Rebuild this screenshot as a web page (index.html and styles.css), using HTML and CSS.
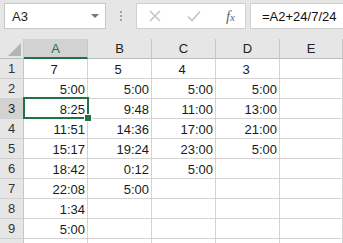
FILE: index.html
```html
<!DOCTYPE html>
<html lang="en">
  <head>
    <meta charset="UTF-8" />
    <meta name="viewport" content="width=device-width, initial-scale=1.0" />
    <title>Sheet</title>
    <link rel="stylesheet" href="styles.css">
  </head>
  <body>
    <div class="toolbar">
      <div class="namebox">
        <span>A3</span>
        <span class="drop"></span>
      </div>
      <div class="dots"><i></i><i></i><i></i></div>
      <div class="actions">
        <svg width="14" height="14" viewBox="0 0 14 14"><path d="M2 2L12 12M12 2L2 12" stroke="#c4c4c4" stroke-width="1.6" fill="none"/></svg>
        <svg width="16" height="14" viewBox="0 0 16 14"><path d="M2 7.5L6 11.5L14 2.5" stroke="#c4c4c4" stroke-width="1.6" fill="none"/></svg>
        <span class="fx">f<small>x</small></span>
      </div>
      <div class="formula">=A2+24/7/24</div>
    </div>

    <div class="sheet">
      <div class="corner"><span></span></div>
      <div class="colhead active">A</div>
      <div class="colhead">B</div>
      <div class="colhead">C</div>
      <div class="colhead">D</div>
      <div class="colhead">E</div>

      <div class="rowhead">1</div>
      <div class="cell mid">7</div><div class="cell mid">5</div><div class="cell mid">4</div><div class="cell mid">3</div><div class="cell"></div>

      <div class="rowhead">2</div>
      <div class="cell">5:00</div><div class="cell">5:00</div><div class="cell">5:00</div><div class="cell">5:00</div><div class="cell"></div>

      <div class="rowhead active">3</div>
      <div class="cell selected">8:25<span class="handle"></span></div><div class="cell">9:48</div><div class="cell">11:00</div><div class="cell">13:00</div><div class="cell"></div>

      <div class="rowhead">4</div>
      <div class="cell">11:51</div><div class="cell">14:36</div><div class="cell">17:00</div><div class="cell">21:00</div><div class="cell"></div>

      <div class="rowhead">5</div>
      <div class="cell">15:17</div><div class="cell">19:24</div><div class="cell">23:00</div><div class="cell">5:00</div><div class="cell"></div>

      <div class="rowhead">6</div>
      <div class="cell">18:42</div><div class="cell">0:12</div><div class="cell">5:00</div><div class="cell"></div><div class="cell"></div>

      <div class="rowhead">7</div>
      <div class="cell">22:08</div><div class="cell">5:00</div><div class="cell"></div><div class="cell"></div><div class="cell"></div>

      <div class="rowhead">8</div>
      <div class="cell">1:34</div><div class="cell"></div><div class="cell"></div><div class="cell"></div><div class="cell"></div>

      <div class="rowhead">9</div>
      <div class="cell">5:00</div><div class="cell"></div><div class="cell"></div><div class="cell"></div><div class="cell"></div>

      <div class="rowhead last"></div>
      <div class="cell last"></div><div class="cell last"></div><div class="cell last"></div><div class="cell last"></div><div class="cell last"></div>
    </div>
  </body>
</html>
```

FILE: styles.css
```css
* {
  margin: 0;
  padding: 0;
  box-sizing: border-box;
}

body {
  width: 343px;
  height: 243px;
  overflow: hidden;
  background: #fff;
  font-family: 'Liberation Sans', Arial, sans-serif;
  font-size: 13px;
  color: #1a1a1a;
}

.toolbar {
  display: flex;
  align-items: flex-start;
  height: 39px;
  padding: 3px 0 0 4px;
  background: #e6e6e6;
}

.namebox {
  display: flex;
  align-items: center;
  justify-content: space-between;
  width: 102px;
  height: 26px;
  padding: 0 6px 0 7px;
  background: #fff;
  border: 1px solid #c6c6c6;
  color: #222;
}

.drop {
  width: 0;
  height: 0;
  border-left: 4px solid transparent;
  border-right: 4px solid transparent;
  border-top: 4px solid #777;
}

.dots {
  display: flex;
  flex-direction: column;
  gap: 2px;
  width: 30px;
  padding-top: 8px;
  align-items: center;
}

.dots i {
  display: block;
  width: 2px;
  height: 2px;
  background: #a0a0a0;
}

.actions {
  display: flex;
  align-items: center;
  justify-content: space-between;
  width: 110px;
  height: 26px;
  padding: 0 10px 0 11px;
  background: #fff;
  border: 1px solid #d0d0d0;
}

.fx {
  font-family: 'Liberation Serif', serif;
  font-style: italic;
  font-size: 15px;
  color: #666;
}

.fx small {
  font-size: 11px;
}

.formula {
  flex: 1;
  height: 26px;
  margin-left: 4px;
  padding: 5px 0 0 11px;
  background: #fff;
  border: 1px solid #d0d0d0;
  border-right: none;
  color: #111;
}

.sheet {
  display: grid;
  grid-template-columns: 24px repeat(4, 64px) 1fr;
  grid-auto-rows: 20px;
}

.corner {
  position: relative;
  background: #e6e6e6;
  border-right: 1px solid #c8c8c8;
  border-bottom: 1px solid #bdbdbd;
}

.corner span {
  position: absolute;
  right: 2px;
  bottom: 2px;
  width: 0;
  height: 0;
  border-left: 13px solid transparent;
  border-bottom: 13px solid #b4b4b4;
}

.colhead {
  display: flex;
  align-items: center;
  justify-content: center;
  background: #e6e6e6;
  border-right: 1px solid #c8c8c8;
  border-bottom: 1px solid #bdbdbd;
  color: #222;
}

.colhead.active {
  background: #d2d2d2;
  border-bottom: 2px solid #217346;
  color: #217346;
}

.rowhead {
  display: flex;
  align-items: center;
  justify-content: center;
  background: #e6e6e6;
  border-right: 1px solid #c8c8c8;
  border-bottom: 1px solid #d0d0d0;
  color: #333;
}

.rowhead.active {
  background: #d2d2d2;
  color: #222;
}

.cell {
  position: relative;
  display: flex;
  align-items: center;
  justify-content: flex-end;
  padding: 1px 2px 0 0;
  border-right: 1px solid #d4d4d4;
  border-bottom: 1px solid #d4d4d4;
}

.cell.mid {
  justify-content: center;
  padding-right: 3px;
}

.last {
  height: 4px;
  border-bottom: none;
}

.selected::before {
  content: "";
  position: absolute;
  top: -2px;
  left: -1px;
  right: -2px;
  bottom: -1px;
  border: 2px solid #217346;
}

.handle {
  position: absolute;
  right: -4px;
  bottom: -3px;
  width: 6px;
  height: 6px;
  background: #217346;
  outline: 1px solid #fff;
  z-index: 1;
}
```
